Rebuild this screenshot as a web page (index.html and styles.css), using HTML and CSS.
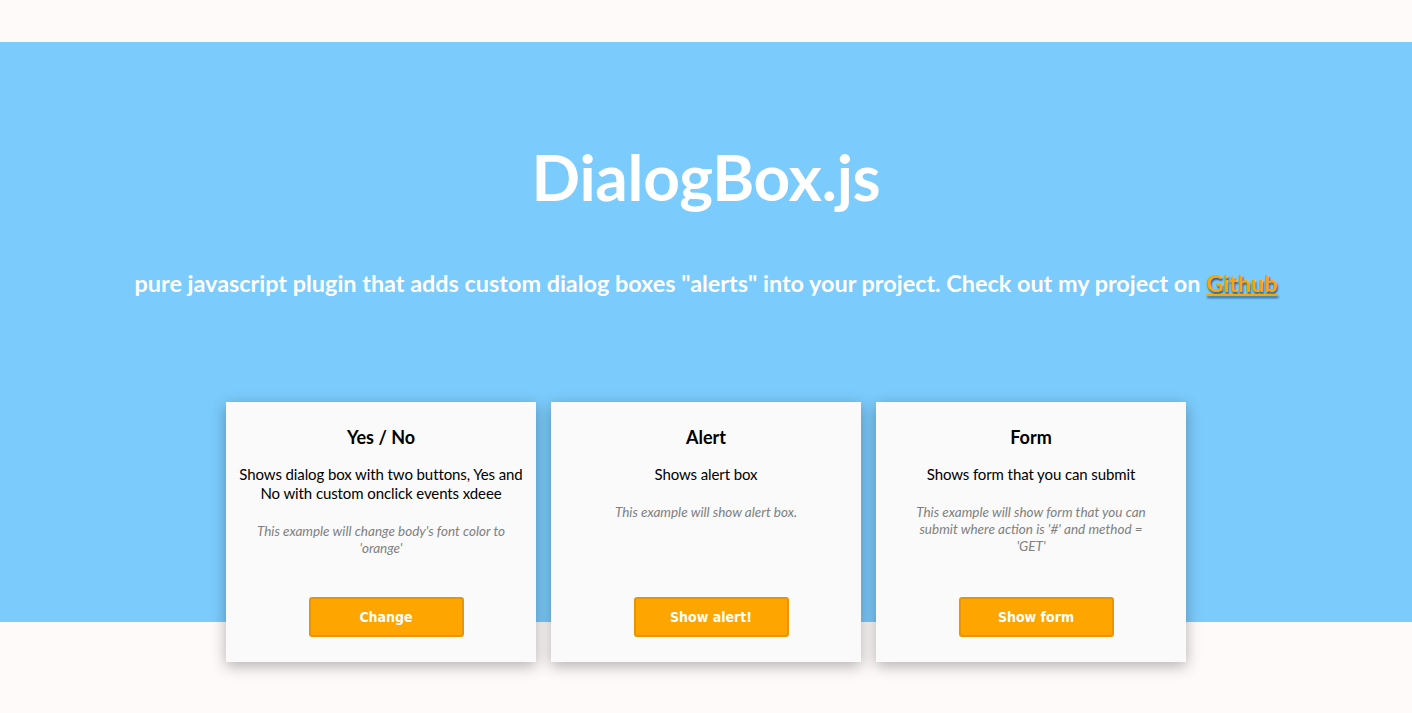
FILE: index.html
```html
<!DOCTYPE html>
<html>
<head>
<meta charset="utf-8">
<title>DialogBox.js</title>
<link rel="stylesheet" href="styles.css">
</head>
<body>
<header class="hero">
  <h1 class="title">DialogBox.js</h1>
  <p class="subtitle">pure javascript plugin that adds custom dialog boxes "alerts" into your project. Check out my project on <a class="gh" href="#">Github</a></p>
  <div class="cards">
    <div class="card">
      <h2 class="card-title">Yes / No</h2>
      <p class="card-desc">Shows dialog box with two buttons, Yes and No with custom onclick events xdeee</p>
      <p class="card-note">This example will change body's font color to 'orange'</p>
      <div class="card-foot"><button class="btn">Change</button></div>
    </div>
    <div class="card">
      <h2 class="card-title">Alert</h2>
      <p class="card-desc">Shows alert box</p>
      <p class="card-note">This example will show alert box.</p>
      <div class="card-foot"><button class="btn">Show alert!</button></div>
    </div>
    <div class="card">
      <h2 class="card-title">Form</h2>
      <p class="card-desc">Shows form that you can submit</p>
      <p class="card-note">This example will show form that you can submit where action is '#' and method = 'GET'</p>
      <div class="card-foot"><button class="btn">Show form</button></div>
    </div>
  </div>
</header>
</body>
</html>
```
FILE: styles.css
```css
html, body {
  margin: 0;
  padding: 0;
}
body {
  background: #fffafa;
  font-family: Lato, "Open Sans", sans-serif;
  color: #000;
  padding-top: 42px;
  height: 671px;
}
.hero {
  background: #7bcbfc;
  text-align: center;
  padding-top: 1px;
  display: flex;
  flex-direction: column;
  align-items: center;
}
.title {
  margin: 97px 0 0;
  font-size: 64px;
  line-height: 74px;
  font-weight: 700;
  color: #fff;
  letter-spacing: -0.3px;
}
.subtitle {
  margin: 54px 0 0;
  font-size: 23.4px;
  line-height: 30px;
  font-weight: 700;
  color: #fff;
}
.gh {
  color: #ffa500;
  text-decoration: underline;
  text-shadow: 1px 2px 2px #2a5a88;
}
.cards {
  display: flex;
  gap: 15px;
  margin-top: 104px;
  margin-bottom: -40px;
}
.card {
  width: 310px;
  height: 260px;
  box-sizing: border-box;
  background: #fafafa;
  box-shadow: 0 4px 14px rgba(0, 0, 0, 0.3);
  padding: 23px 8px 25px;
  display: flex;
  flex-direction: column;
  align-items: center;
}
.card-title {
  margin: 0;
  font-size: 18px;
  line-height: 24px;
  font-weight: 700;
}
.card-desc {
  margin: 16px 0 0;
  font-size: 15px;
  line-height: 19px;
  letter-spacing: -0.1px;
}
.card-note {
  margin: 20px 0 0;
  font-size: 13.5px;
  line-height: 17px;
  font-style: italic;
  color: #808080;
  padding: 0 21px;
}
.card-foot {
  margin-top: auto;
  padding-left: 10px;
}
.btn {
  width: 155px;
  height: 40px;
  background: #ffa500;
  border: 2px solid #e89600;
  border-radius: 3px;
  color: #fff;
  font-family: "DejaVu Sans Condensed", "DejaVu Sans", sans-serif;
  font-stretch: condensed;
  font-weight: 700;
  font-size: 14px;
}
```
